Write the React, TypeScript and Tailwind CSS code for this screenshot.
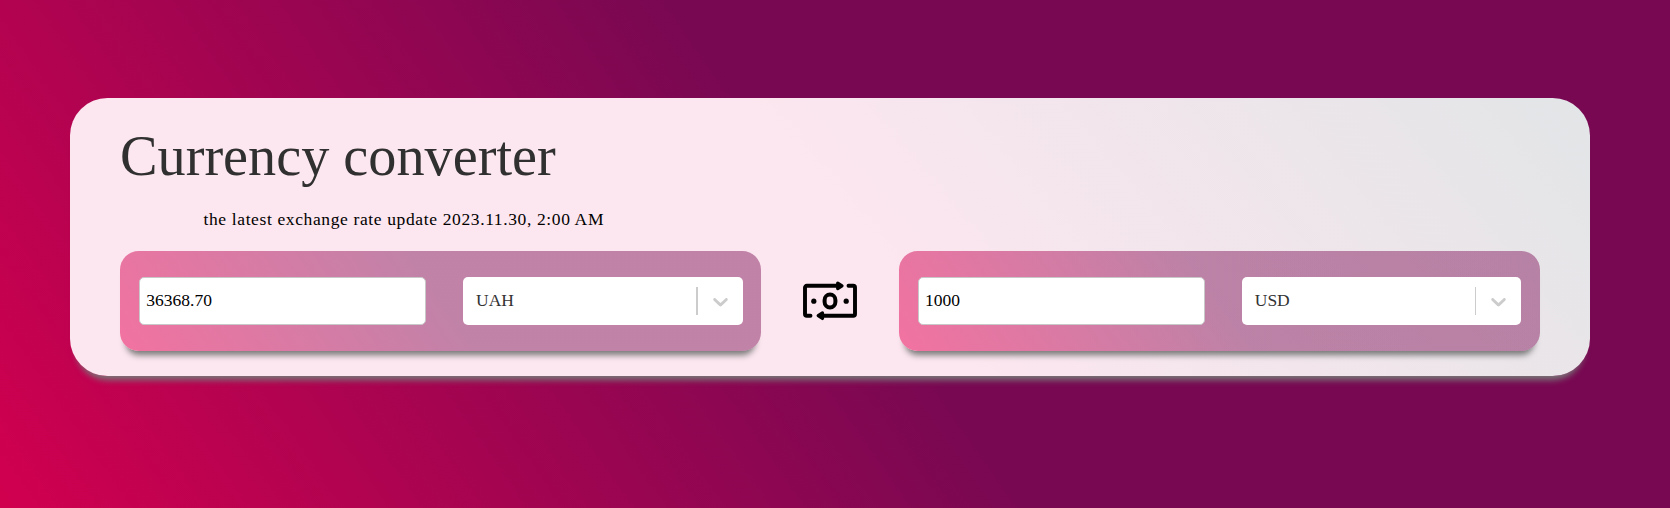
type CurrencyPanelProps = {
  amount: string;
  currency: string;
};

function SwapIcon() {
  return (
    <svg className="h-[50px] w-[64px] shrink-0" viewBox="0 0 64 50" fill="none" stroke="#000" strokeWidth="3.9" strokeLinecap="round" strokeLinejoin="round">
      <path d="M39 9.8H8.8a1.8 1.8 0 0 0-1.8 1.8V37.9a1.8 1.8 0 0 0 1.8 1.8H12.5" />
      <path d="M25 39.7H55.2a1.8 1.8 0 0 0 1.8-1.8V11.6a1.8 1.8 0 0 0-1.8-1.8H50.5" />
      <path d="M39.7 7 44 9.8 39.7 12.6Z" fill="#000" strokeWidth="3.2" />
      <path d="M24.5 36.9 20.2 39.7 24.5 42.5Z" fill="#000" strokeWidth="3.2" />
      <rect x="26.6" y="18.5" width="10.8" height="13" rx="5.4" strokeWidth="4" />
      <circle cx="15.8" cy="25.2" r="2.6" fill="#000" stroke="none" />
      <circle cx="48.2" cy="25.2" r="2.6" fill="#000" stroke="none" />
    </svg>
  );
}

function CurrencyPanel({ amount, currency }: CurrencyPanelProps) {
  return (
    <section className="flex h-[100px] w-[641.25px] items-center justify-between rounded-[18.75px] bg-[linear-gradient(55deg,#f272a0_0%,rgba(122,9,82,0.45)_50%)] px-[18.75px] shadow-[0_10px_6px_-6px_#777]">
      <input
        className="h-12 w-[287px] rounded-[5px] border border-[#c8c8c8] bg-white px-[6.5px] pb-[2px] text-[17.5px] text-black outline-none"
        defaultValue={amount}
        aria-label="Amount"
      />
      <button className="flex h-12 w-[279.5px] items-center rounded-[5px] bg-white text-[17.5px] text-[#333]">
        <span className="grow pb-[2px] pl-[13px] text-left">{currency}</span>
        <span className="h-7 w-[1.25px] bg-[#ccc]" />
        <svg className="mx-[10px] size-[25px]" viewBox="0 0 20 20" fill="#ccc">
          <path d="M4.516 7.548c0.436-0.446 1.043-0.481 1.576 0l3.908 3.747 3.908-3.747c0.533-0.481 1.141-0.446 1.574 0 0.436 0.445 0.408 1.197 0 1.615-0.406 0.418-4.695 4.502-4.695 4.502-0.217 0.223-0.502 0.335-0.787 0.335s-0.570-0.112-0.789-0.335c0 0-4.287-4.084-4.695-4.502s-0.436-1.170 0-1.615z" />
        </svg>
      </button>
    </section>
  );
}

export default function App() {
  return (
    <div className="h-[508px] w-full bg-[linear-gradient(55deg,#d1004f_0%,#780852_51%)] px-[70px] pt-[98px] font-['Liberation_Serif',serif]">
      <main className="flex h-[278px] w-[1520px] flex-col rounded-[37.5px] bg-[linear-gradient(50deg,#fce6ef_52%,#e2e5e7_100%)] px-[50px] pt-7 shadow-[0_10px_6px_-6px_#777]">
        <h1 className="text-[56.25px] leading-[60px] text-[#303030]">Currency converter</h1>
        <p className="mt-[21px] pl-[83.5px] text-[17.5px] leading-[25px] tracking-[0.625px] text-black">
          the latest exchange rate update 2023.11.30, 2:00 AM
        </p>
        <div className="mt-[19px] flex items-center justify-between">
          <CurrencyPanel amount="36368.70" currency="UAH" />
          <SwapIcon />
          <CurrencyPanel amount="1000" currency="USD" />
        </div>
      </main>
    </div>
  );
}
